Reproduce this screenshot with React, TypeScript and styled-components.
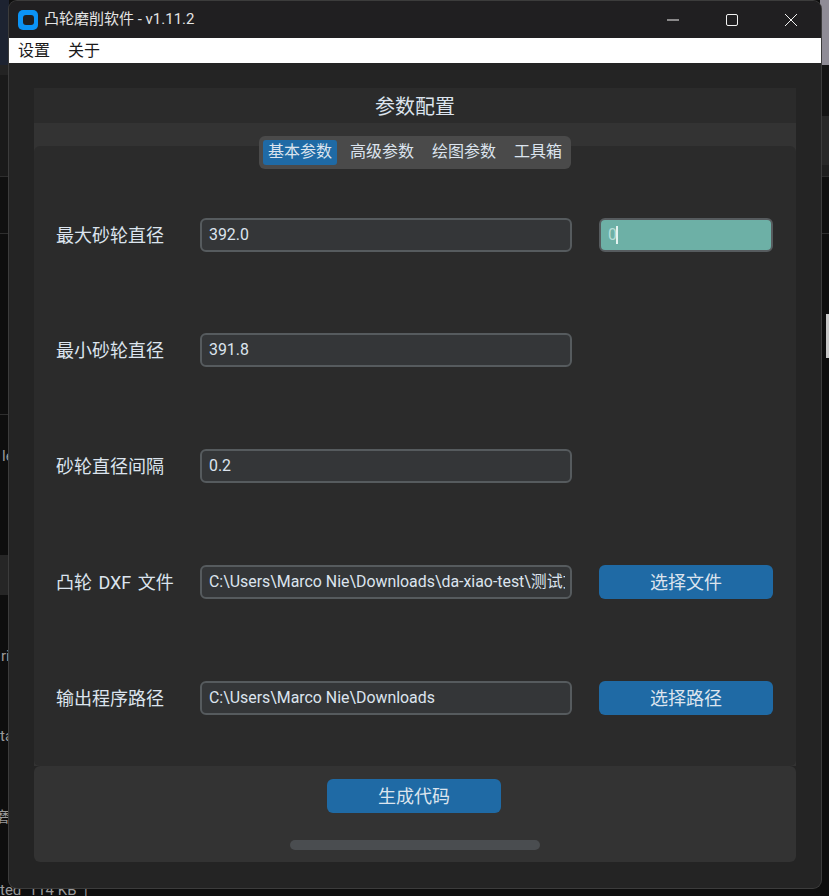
import React from 'react';
import styled, { createGlobalStyle } from 'styled-components';

const GlobalStyle = createGlobalStyle`
  html, body {
    margin: 0;
    padding: 0;
    background: #0e0e0e;
  }
  * {
    box-sizing: border-box;
  }
`;

const FONT = `Roboto, "Noto Sans CJK SC", sans-serif`;

const Desktop = styled.div`
  position: relative;
  width: 829px;
  height: 896px;
  overflow: hidden;
  display: flex;
  justify-content: space-between;
  background: #0e0e0e;
  font-family: ${FONT};
`;

const Strip = styled.div`
  width: 9px;
  display: flex;
  flex-direction: column;
`;

const Band = styled.div<{ $h: number; $bg: string; $line?: boolean }>`
  height: ${p => p.$h}px;
  flex: none;
  background: ${p => p.$bg};
  border-bottom: ${p => (p.$line ? '1px solid #2e2e2e' : 'none')};
`;

const ScrollThumb = styled.div`
  position: absolute;
  right: 0;
  top: 314px;
  width: 3px;
  height: 44px;
  background: #c8c8c8;
`;

const Window = styled.div`
  position: absolute;
  left: 9px;
  top: 1px;
  width: 812px;
  height: 887px;
  display: flex;
  flex-direction: column;
  border-radius: 8px;
  overflow: hidden;
  background: #242424;
  box-shadow: 0 0 0 1px #3c3c3c;
`;

const TitleBar = styled.div`
  height: 37px;
  flex: none;
  display: flex;
  align-items: center;
  background: #201f21;
  padding-left: 9px;
`;

const AppTitle = styled.div`
  margin-left: 6px;
  padding-bottom: 4px;
  font-size: 15px;
  color: #e4e4e4;
  white-space: nowrap;
`;

const WindowButtons = styled.div`
  margin-left: auto;
  margin-right: 1px;
  display: flex;
  align-items: center;
  height: 100%;
`;

const WindowButton = styled.div`
  width: 59px;
  height: 100%;
  display: flex;
  align-items: center;
  justify-content: center;
`;

const MenuBar = styled.div`
  height: 25px;
  flex: none;
  display: flex;
  align-items: center;
  gap: 18px;
  padding: 0 0 3px 9px;
  background: #ffffff;
  font-size: 16px;
  color: #1a1a1a;
`;

const Body = styled.div`
  flex: 1;
  display: flex;
  flex-direction: column;
  padding: 25px 25px 26px;
`;

const Heading = styled.div`
  height: 35px;
  flex: none;
  display: flex;
  align-items: center;
  justify-content: center;
  background: #2b2b2b;
  font-size: 20px;
  color: #dce4ee;
`;

const TabArea = styled.div`
  position: relative;
  height: 643px;
  flex: none;
  padding-top: 23px;
  background: #333333;
`;

const TabBar = styled.div`
  position: absolute;
  top: 13px;
  left: 225px;
  display: flex;
  align-items: center;
  gap: 8px;
  height: 33px;
  padding: 0 4px;
  border-radius: 6px;
  background: #4a4a4a;
`;

const Tab = styled.div<{ $active?: boolean }>`
  height: 25px;
  padding: 0 5px 5px;
  display: flex;
  align-items: center;
  border-radius: 3px;
  font-size: 16px;
  color: #dce4ee;
  background: ${p => (p.$active ? '#1f6aa5' : 'transparent')};
`;

const TabBody = styled.div`
  height: 620px;
  display: grid;
  grid-template-rows: repeat(5, 34px);
  row-gap: 81.8px;
  padding: 71.6px 23px 0 22px;
  border-radius: 6px;
  background: #2b2b2b;
`;

const Row = styled.div`
  display: grid;
  grid-template-columns: 117px 372px 174px;
  column-gap: 27px;
  align-items: center;
`;

const Label = styled.div`
  padding-bottom: 2px;
  font-size: 18px;
  word-spacing: 2px;
  color: #dce4ee;
  white-space: nowrap;
`;

const Field = styled.div<{ $teal?: boolean }>`
  height: 34px;
  display: flex;
  align-items: center;
  padding: 0 5px 0 7px;
  border: 2px solid #565b5e;
  border-radius: 6px;
  background: ${p => (p.$teal ? '#6db0a6' : '#343638')};
  font-size: 15.9px;
  color: ${p => (p.$teal ? '#b5dcd6' : '#dce4ee')};
`;

const FieldText = styled.span`
  line-height: 20px;
  white-space: nowrap;
  overflow: hidden;
`;

const Caret = styled.span`
  width: 2px;
  height: 18px;
  margin-left: -1px;
  background: #e4f2f0;
`;

const BlueButton = styled.div`
  height: 34px;
  width: 174px;
  padding-bottom: 2px;
  display: flex;
  align-items: center;
  justify-content: center;
  border-radius: 6px;
  background: #1f6aa5;
  font-size: 18px;
  color: #dce4ee;
`;

const Footer = styled.div`
  height: 96px;
  flex: none;
  display: flex;
  flex-direction: column;
  align-items: center;
  padding-top: 13px;
  border-radius: 6px;
  background: #333333;
`;

const GenerateButton = styled(BlueButton)`
  margin-right: 2px;
`;

const Progress = styled.div`
  width: 250px;
  height: 10px;
  margin-top: 27px;
  border-radius: 5px;
  background: #4a4d50;
`;

const Scrap = styled.div<{ $left: number; $top: number }>`
  position: absolute;
  left: ${p => p.$left}px;
  top: ${p => p.$top}px;
  font-size: 15px;
  color: #9a9a9a;
  white-space: nowrap;
`;

const LogoIcon = () => (
  <svg width="20" height="20" viewBox="0 0 20 20">
    <rect width="20" height="20" rx="5" fill="#0b93f6" />
    <rect x="5" y="5" width="11" height="10" rx="3" fill="#201f21" />
  </svg>
);

const App: React.FC = () => (
  <Desktop>
    <GlobalStyle />
    <Strip>
      <Band $h={65} $bg="#1d2331" />
      <Band $h={10} $bg="#232323" />
      <Band $h={102} $bg="#1a1a1a" $line />
      <Band $h={57} $bg="#101010" $line />
      <Band $h={181} $bg="#0e0e0e" $line />
      <Band $h={140} $bg="#0e0e0e" />
      <Band $h={40} $bg="#262626" />
    </Strip>
    <Strip>
      <Band $h={65} $bg="#8f8c96" />
      <Band $h={51} $bg="#151515" />
      <Band $h={49} $bg="#282828" />
      <Band $h={12} $bg="#1f1f1f" $line />
      <Band $h={57} $bg="#0f0f0f" $line />
    </Strip>
    <ScrollThumb />
    <Scrap $left={2} $top={447}>le</Scrap>
    <Scrap $left={1} $top={647}>ri</Scrap>
    <Scrap $left={0} $top={727}>ta</Scrap>
    <Scrap $left={-6} $top={805}>磨</Scrap>
    <Scrap $left={0} $top={881}>ted&nbsp;&nbsp;114 KB&nbsp;&nbsp;|</Scrap>
    <Window>
      <TitleBar>
        <LogoIcon />
        <AppTitle>凸轮磨削软件 - v1.11.2</AppTitle>
        <WindowButtons>
          <WindowButton>
            <svg width="12" height="12" viewBox="0 0 12 12"><path d="M0 6h12" stroke="#f2f2f2" /></svg>
          </WindowButton>
          <WindowButton>
            <svg width="12" height="12" viewBox="0 0 12 12"><rect x=".5" y=".5" width="11" height="11" rx="1.5" fill="none" stroke="#f2f2f2" /></svg>
          </WindowButton>
          <WindowButton>
            <svg width="12" height="12" viewBox="0 0 12 12"><path d="M0 0l12 12M12 0L0 12" stroke="#f2f2f2" /></svg>
          </WindowButton>
        </WindowButtons>
      </TitleBar>
      <MenuBar>
        <span>设置</span>
        <span>关于</span>
      </MenuBar>
      <Body>
        <Heading>参数配置</Heading>
        <TabArea>
          <TabBar>
            <Tab $active>基本参数</Tab>
            <Tab>高级参数</Tab>
            <Tab>绘图参数</Tab>
            <Tab>工具箱</Tab>
          </TabBar>
          <TabBody>
            <Row>
              <Label>最大砂轮直径</Label>
              <Field><FieldText>392.0</FieldText></Field>
              <Field $teal><FieldText>0</FieldText><Caret /></Field>
            </Row>
            <Row>
              <Label>最小砂轮直径</Label>
              <Field><FieldText>391.8</FieldText></Field>
            </Row>
            <Row>
              <Label>砂轮直径间隔</Label>
              <Field><FieldText>0.2</FieldText></Field>
            </Row>
            <Row>
              <Label>凸轮 DXF 文件</Label>
              <Field><FieldText>C:\Users\Marco Nie\Downloads\da-xiao-test\测试文件</FieldText></Field>
              <BlueButton>选择文件</BlueButton>
            </Row>
            <Row>
              <Label>输出程序路径</Label>
              <Field><FieldText>C:\Users\Marco Nie\Downloads</FieldText></Field>
              <BlueButton>选择路径</BlueButton>
            </Row>
          </TabBody>
        </TabArea>
        <Footer>
          <GenerateButton>生成代码</GenerateButton>
          <Progress />
        </Footer>
      </Body>
    </Window>
  </Desktop>
);

export default App;
